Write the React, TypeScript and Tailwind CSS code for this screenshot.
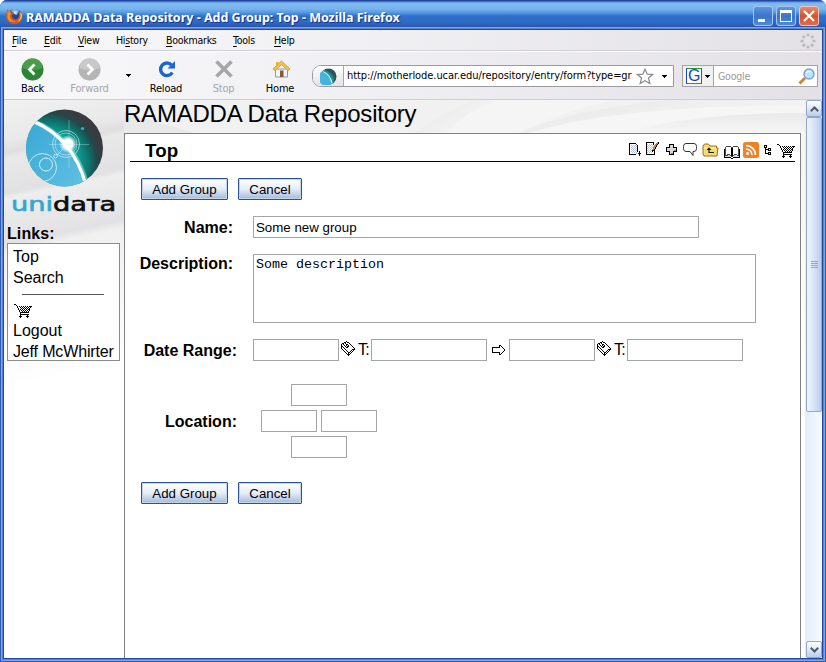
import React from "react";

const INK: Record<string, string> = {
  X: "#000000",
  d: "#4a4a4a",
  g: "#8a8a8a",
  l: "#d4d6dc",
  b: "#b9c3e0",
  w: "#ffffff",
  o: "#c98236",
};

function Pixels({ rows, className }: { rows: string[]; className?: string }) {
  const w = Math.max(...rows.map((r) => r.length));
  return (
    <svg
      width={w}
      height={rows.length}
      viewBox={`0 0 ${w} ${rows.length}`}
      shapeRendering="crispEdges"
      className={"shrink-0 " + (className ?? "")}
    >
      {rows.flatMap((row, y) =>
        row.split("").map((c, x) =>
          INK[c] ? <rect key={`${x}-${y}`} x={x} y={y} width="1" height="1" fill={INK[c]} /> : null
        )
      )}
    </svg>
  );
}

const CART = [
  "XX................",
  "..X...............",
  "...X.X.X.X.X.X.XXX",
  "...X..X.X.X.X.X.X.",
  "....X..X.X.X.X.X..",
  "....X.X.X.X.X.XX..",
  ".....X.X.X.X.X.X..",
  ".....X..X.X.X.X...",
  "......XXXXXXXXX...",
  "......X...........",
  "......XXXXXXXXX...",
  "......X......X....",
  ".....XXX....XXX...",
  "......X......X....",
];
const ARROW = [
  ".......XX....",
  ".......X.X...",
  "XXXXXXXX..X..",
  "X..........X.",
  "X...........X",
  "X...........X",
  "X..........X.",
  "XXXXXXXX..X..",
  ".......X.X...",
  ".......XX....",
];
const CALENDAR = [
  ".....X........",
  "...XX.XX......",
  ".XX.X...X.....",
  "X.X..XX..X....",
  "X..X.X.X..X...",
  "XX..X.XX...X..",
  "X.X..XX.....X.",
  "X..X.........X",
  ".X..X......XXX",
  "..X..X....X.X.",
  "...X..X..X.X..",
  "....X..XX.X...",
  ".....X.X.X....",
  "......XXX.....",
  ".......X......",
];
const ADD_DOC = [
  "XXXXXXX.....",
  "Xwwwwwwd....",
  "XwbwbwbwX...",
  "XwwbwbwbX...",
  "XwbwbwbwX...",
  "XwwbwbwbX...",
  "XwbwbwbwX...",
  "XwwbwbwbX...",
  "XwbwbwbwX.X.",
  "Xwwbwbwb..X.",
  "Xwwwwwwb.XXX",
  "XXXXXXX...X.",
  "..........X.",
];
const EDIT_DOC = [
  "XXXXXXXX...oX",
  "XwwwwwwX..ooX",
  "XbwbwbwX.ooX.",
  "XwbwbwbwooX..",
  "XbwbwbwbooX..",
  "XwbwbwbooX...",
  "XbwbwbwooX...",
  "XwbwbwooX....",
  "XbwbwbXXX....",
  "XwbwbwXwX....",
  "XbwbwbwwX....",
  "XwwwwwwwX....",
  "XXXXXXXXX....",
];
const PLUS = [
  "...XXXXX...",
  "...XlllX...",
  "...XlllX...",
  "XXXXlllXXXX",
  "XlllllllllX",
  "XlllllllllX",
  "XlllllllggX",
  "XXXXlllXXXX",
  "...XlllX...",
  "...XlggX...",
  "...XXXXX...",
];
const BOOK = [
  "..ddddd..ddddd..",
  ".dwwwwwddwwwwwd.",
  ".dwwwwwXXwwwwwd.",
  "XdwwwwwXXwwwwwdX",
  "XdwwwwwXXwwwwwdX",
  "XdwwwwwXXwwwwwdX",
  "XdwwwwwXXwwwwwdX",
  "XdwwwwwXXwwwwwdX",
  "XdwdddwXXwdddwdX",
  "XdddlldXXdllwddX",
  "XllllllddllllllX",
  "XXXXXXXwwXXXXXXX",
  ".......XX.......",
];
const TREE = [
  "XXX....",
  "X.X....",
  "XXX....",
  ".X..XXX",
  ".XXXX.X",
  ".X..XXX",
  ".X.....",
  ".X..XXX",
  ".XXXX.X",
  "....XXX",
];
const CARET = ["XXXXX", ".XXX.", "..X.."];

const MENU: [string, string, string, string][] = [
  ["", "F", "ile", "w-[32px]"],
  ["", "E", "dit", "w-[34px]"],
  ["", "V", "iew", "w-[38px]"],
  ["Hi", "s", "tory", "w-[50px]"],
  ["", "B", "ookmarks", "w-[67px]"],
  ["", "T", "ools", "w-[41px]"],
  ["", "H", "elp", "w-[40px]"],
];

function Firefox() {
  return (
    <svg width="17" height="17" viewBox="0 0 17 17" className="shrink-0">
      <circle cx="8.5" cy="8" r="7" fill="#24478f" />
      <path d="M5 2.500C7 .5 11 .5 13 3L11 7 8 6 6 4z" fill="#79b4e6" />
      <path d="M8 3l3 .5-1 3-2-1z" fill="#c4e2f7" />
      <path
        d="M1.500 1.500L3 3l2.500-.3L5.500 5l2.500.8-2 1.700c-.5 3 3 5 5.500 3.200C13.500 9 13.500 5.500 12.500 3.500l1.700 1.200.3-1.700C17 6 17 11.500 14 14c-4 3.500-10 2.500-12.500-1.500C-.5 9 .2 4.500 1.500 1.500z"
        fill="#d4571b"
      />
      <path d="M1.500 3.500l2-.2L5 5.500 3.800 8c0 3 2.700 5.500 6.200 5-3.500 2-7.500.5-8.500-3z" fill="#f0902e" />
      <path d="M14 4.500c1.500 4 0 7.500-3 9.500 4-.5 6-5.500 4.300-9z" fill="#fbd35c" />
    </svg>
  );
}

function ToolButton({ label, width, dim, children }: { label: string; width: string; dim?: boolean; children: React.ReactNode }) {
  return (
    <div className={"flex shrink-0 flex-col items-center pt-[5px] " + width}>
      <div className="flex h-[24px] items-center">{children}</div>
      <span className={"mt-[1px] text-[11px] leading-[14px] " + (dim ? "text-[#a7a6aa]" : "text-black")}>{label}</span>
    </div>
  );
}

function Globe() {
  return (
    <svg width="17" height="17" viewBox="0 0 17 17">
      <circle cx="8.500" cy="8.500" r="8" fill="#2a5560" />
      <path d="M5 2Q13 5 14.500 12L12 15Q12 7 3 2.500z" fill="#1d8f8d" />
      <path d="M2.500 3A8 8 0 1 0 12.500 15.300Q11 7 2.500 3z" fill="#45b3dc" />
      <path d="M3 3.500Q10 6 12 15" stroke="#c8eefa" strokeWidth="1.200" fill="none" />
    </svg>
  );
}

function Logo() {
  return (
    <svg width="80" height="80" viewBox="0 0 80 80" className="ml-[21px] mt-[9px] block">
      <defs>
        <radialGradient id="night" gradientUnits="userSpaceOnUse" cx="22" cy="54" r="62">
          <stop offset="0.500" stopColor="#0fa096" />
          <stop offset="0.680" stopColor="#0b746d" />
          <stop offset="0.800" stopColor="#23484a" />
          <stop offset="0.900" stopColor="#383c3e" />
        </radialGradient>
        <linearGradient id="day" x1="0" y1="0" x2="1" y2="1">
          <stop offset="0" stopColor="#36a7d4" />
          <stop offset="1" stopColor="#63c0e4" />
        </linearGradient>
        <radialGradient id="flare">
          <stop offset="0.500" stopColor="#fff" />
          <stop offset="1" stopColor="#fff" stopOpacity="0" />
        </radialGradient>
        <clipPath id="disc">
          <circle cx="39.500" cy="39" r="38.500" />
        </clipPath>
      </defs>
      <g clipPath="url(#disc)">
        <rect width="80" height="80" fill="url(#night)" />
        <path d="M0 8L10 13Q48 28 62 78V80H0z" fill="url(#day)" />
        <path d="M8 12Q49 29 62 76" stroke="#b8f0f0" strokeOpacity=".5" strokeWidth="5" fill="none" />
        <path d="M8 12Q48 29 61 76" stroke="#fff" strokeWidth="3" fill="none" />
        <circle cx="43" cy="35" r="9" fill="url(#flare)" />
        <circle cx="41" cy="35" r="13.500" stroke="#d7f3f6" strokeOpacity=".8" strokeWidth=".8" fill="none" />
        <circle cx="41" cy="35" r="11" stroke="#d7f3f6" strokeOpacity=".7" strokeWidth=".8" fill="none" />
        <path d="M44 11V59M24 35.500H64" stroke="#cfeef0" strokeOpacity=".5" strokeWidth=".7" />
        <circle cx="17.500" cy="58.500" r="14" stroke="#c5ebf6" strokeWidth="1" fill="none" />
        <circle cx="21" cy="55.500" r="6.500" stroke="#d5f1fa" strokeWidth="1" fill="none" />
        <circle cx="30.500" cy="47" r="1.800" stroke="#d5f1fa" strokeWidth=".8" fill="none" />
        <path d="M32 46L38 40" stroke="#c5ebf6" strokeWidth=".7" />
        <circle cx="57.500" cy="19.500" r="1.600" fill="#27b5dc" />
      </g>
    </svg>
  );
}

function Swooshes() {
  return (
    <svg width="681" height="33" viewBox="0 0 681 33" className="absolute left-0 top-0">
      <defs>
        <linearGradient id="sweep" x1="0" y1="0" x2="0" y2="1">
          <stop offset="0" stopColor="#e9e9ea" />
          <stop offset="1" stopColor="#f6f6f6" />
        </linearGradient>
        <linearGradient id="fold" x1="0" y1="0" x2="1" y2="0.600">
          <stop offset="0" stopColor="#e7e7e8" />
          <stop offset="1" stopColor="#f6f6f6" />
        </linearGradient>
      </defs>
      <rect width="681" height="33" fill="#f1f1f2" />
      <path d="M0 12L70 33H0z" fill="#e9e9ea" />
      <path d="M290 33Q320 12 350 0H376Q345 14 322 33z" fill="url(#fold)" />
      <path d="M322 33Q340 12 375 0H490Q440 10 395 33z" fill="#f5f5f5" />
      <path d="M395 33Q440 12 540 0H681V8Q500 8 440 33z" fill="url(#fold)" />
      <path d="M405 33Q500 4 681 6V13Q570 12 500 33z" fill="#f6f6f6" />
      <path d="M500 33Q570 13 681 13V33z" fill="url(#sweep)" />
    </svg>
  );
}

function Folder() {
  return (
    <svg width="17" height="14" viewBox="0 0 17 14">
      <path d="M1 3L2.500 1h4L8 3h6.500v2H16l-1 8H2L1 11z" fill="#f6da72" stroke="#9a7415" />
      <path d="M2 5h12" stroke="#fff5c0" />
      <path d="M7 9.500h5M7 10V5.500" stroke="#1d1d1d" strokeWidth="1.200" />
      <path d="M4.500 7L7 4.200L9.500 7z" fill="#1d1d1d" />
    </svg>
  );
}

function PushButton({ children, className }: { children: string; className: string }) {
  return (
    <button
      className={
        "h-[22px] shrink-0 rounded-[1px] border border-[#2c5391] bg-linear-to-b from-white via-[#e6edf6] to-[#a3b9dc] p-0 text-center text-[13.3px] leading-[21px] text-black shadow-[inset_0_0_0_1px_#c3d3ea] " +
        className
      }
    >
      {children}
    </button>
  );
}

function Buttons() {
  return (
    <div className="flex h-[22px] gap-[10px] pl-[16px]">
      <PushButton className="w-[87px]">Add Group</PushButton>
      <PushButton className="w-[64px]">Cancel</PushButton>
    </div>
  );
}

const BOX = "block h-[22px] shrink-0 rounded-none border border-[#a5a5a9] bg-white p-0 outline-none ";

function DateInput() {
  return (
    <>
      <input className={BOX + "w-[86px]"} />
      <Pixels rows={CALENDAR} className="ml-[2px] -mt-[4px]" />
      <span className="w-[16px] pl-[3px] text-[16px] tracking-[-0.7px]">T:</span>
      <input className={BOX + "w-[116px]"} />
    </>
  );
}

function CaptionButton({ red, children }: { red?: boolean; children: React.ReactNode }) {
  return (
    <div
      className={
        "flex h-[20px] w-[20px] items-center justify-center rounded-[3px] border " +
        (red
          ? "border-[#efc3b8] bg-linear-to-b from-[#e58b6c] via-[#d9512b] to-[#dd6b45]"
          : "border-[#a7c6ee] bg-linear-to-b from-[#5d97dd] via-[#3a75cb] to-[#4d8ad8]")
      }
    >
      {children}
    </div>
  );
}

function ScrollButton({ down }: { down?: boolean }) {
  return (
    <div className="flex h-[17px] w-[16px] shrink-0 items-center justify-center rounded-[2px] border border-[#92a9cb] bg-linear-to-b from-white via-[#dfe9f8] to-[#b9cdea]">
      <svg width="9" height="6" viewBox="0 0 9 6">
        <path d={down ? "M.8 .8L4.500 4.500L8.200 .8" : "M.8 5.200L4.500 1.500L8.200 5.200"} fill="none" stroke="#4d5a66" strokeWidth="2" />
      </svg>
    </div>
  );
}

export default function App() {
  return (
    <div className="flex h-[662px] w-[826px] flex-col overflow-hidden rounded-t-[7px] bg-[#2c57ad] font-['Liberation_Sans',Arial,sans-serif] text-black">
      <header className="flex h-[30px] shrink-0 items-center bg-[linear-gradient(#2446a0_0px,#2446a0_1px,#5b9be2_2px,#83bdf2_4px,#76b4ed_9px,#5394df_13px,#2e70c9_16px,#2c6bc4_22px,#2b55b4_27px,#2445a0_30px)] pl-[6px] pr-[7px] pt-[2px]">
        <Firefox />
        <h1 className="ml-[3px] mt-[3px] whitespace-nowrap font-['Noto_Sans',sans-serif] text-[12.5px] font-bold leading-[18px] text-white [text-shadow:1px_1px_#173582]">
          RAMADDA Data Repository - Add Group: Top - Mozilla Firefox
        </h1>
        <div className="ml-auto flex gap-[3px]">
          <CaptionButton>
            <i className="-ml-[4px] mt-[9px] h-[3px] w-[7px] bg-white" />
          </CaptionButton>
          <CaptionButton>
            <i className="h-[12px] w-[12px] border border-t-[3px] border-white" />
          </CaptionButton>
          <CaptionButton red>
            <svg width="12" height="12" viewBox="0 0 12 12">
              <path d="M1 1L11 11M11 1L1 11" stroke="#fff" strokeWidth="2.300" />
            </svg>
          </CaptionButton>
        </div>
      </header>

      <div className="flex min-h-0 flex-1 border-x-4 border-b-4 border-[#2f5db6] bg-[#7ba6e3]">
        <div className="flex min-w-0 flex-1 flex-col bg-white shadow-[0_0_0_1px_#24479f,0_0_0_2px_#5b86cf,0_0_0_3px_#7ba6dc]">
          <div className="flex h-[22px] shrink-0 items-center border-b border-white bg-[linear-gradient(90deg,#f8f7f9,#efeef1_50%,#e3e1e6)] pl-[8px] font-['DejaVu_Sans_Condensed','DejaVu_Sans',sans-serif] text-[10.5px] shadow-[inset_0_-1px_#cfccd2]">
            {MENU.map(([before, key, after, width]) => (
              <span key={key + after} className={"shrink-0 whitespace-nowrap tracking-[-0.25px] " + width}>
                {before}
                <u className="underline-offset-2">{key}</u>
                {after}
              </span>
            ))}
            <svg width="16" height="16" viewBox="0 0 16 16" className="ml-auto mr-[6px]">
              <g fill="#bbb9bd">
                <circle cx="8" cy="2" r="1.600" />
                <circle cx="12.200" cy="3.800" r="1.600" />
                <circle cx="14" cy="8" r="1.600" />
                <circle cx="12.200" cy="12.200" r="1.600" />
                <circle cx="8" cy="14" r="1.600" />
                <circle cx="3.800" cy="12.200" r="1.600" />
                <circle cx="2" cy="8" r="1.600" />
                <circle cx="3.800" cy="3.800" r="1.600" />
              </g>
            </svg>
          </div>

          <div className="flex h-[48px] shrink-0 border-b border-[#cfccd2] bg-[linear-gradient(90deg,#f8f7f9,#efeef1_50%,#e3e1e6)] font-['DejaVu_Sans_Condensed','DejaVu_Sans',sans-serif] tracking-[-0.2px]">
            <ToolButton label="Back" width="w-[57px]">
              <svg width="23" height="23" viewBox="0 0 23 23">
                <circle cx="11.500" cy="11.500" r="11" fill="#2e8435" />
                <path d="M1.500 10a10 10 0 0 1 20 0Q11 14 1.500 10z" fill="#5cab58" fillOpacity=".65" />
                <path d="M13.500 6.500L8.500 11.500L13.500 16.500" fill="none" stroke="#fff" strokeWidth="2.800" />
              </svg>
            </ToolButton>
            <ToolButton label="Forward" width="w-[57px]" dim>
              <svg width="23" height="23" viewBox="0 0 23 23">
                <circle cx="11.500" cy="11.500" r="11" fill="#b5b5b5" />
                <path d="M1.500 10a10 10 0 0 1 20 0Q11 14 1.500 10z" fill="#d0d0d0" fillOpacity=".7" />
                <path d="M9.500 6.500L14.500 11.500L9.500 16.500" fill="none" stroke="#fff" strokeWidth="2.800" />
              </svg>
            </ToolButton>
            <Pixels rows={CARET} className="ml-[8px] mr-[10px] mt-[22px]" />
            <ToolButton label="Reload" width="w-[50px]">
              <svg width="18" height="18" viewBox="0 0 18 18" className="ml-[2px]">
                <path d="M13.500 5A6.300 6.300 0 1 0 14.300 12.500" fill="none" stroke="#1965d8" strokeWidth="3.400" />
                <path d="M17 1V8.500H9.500z" fill="#1965d8" />
              </svg>
            </ToolButton>
            <ToolButton label="Stop" width="w-[65px]" dim>
              <svg width="18" height="18" viewBox="0 0 18 18">
                <path d="M1.500 1.500L16.500 16.500M16.500 1.500L1.500 16.500" stroke="#a6a6a8" strokeWidth="3.500" />
              </svg>
            </ToolButton>
            <ToolButton label="Home" width="w-[48px]">
              <svg width="19" height="18" viewBox="0 0 19 18" className="ml-[2px]">
                <path d="M3.500 9h12v8h-12z" fill="#f1f4fb" stroke="#7a9cd6" />
                <path d="M8 10.500h3.500V17H8z" fill="#93552a" />
                <path d="M9.500 1L18 9l-2 1.500-6.500-6L3 10.500 1 9z" fill="#f5c448" stroke="#dda128" />
                <path d="M4 2h2.500v3L4 7z" fill="#e7ae3c" />
              </svg>
            </ToolButton>

            <div className="ml-[8px] mt-[13px] flex h-[22px] w-[362px] shrink-0 items-center overflow-hidden rounded-l-[9px] border border-[#9c9aa0] bg-white">
              <div className="flex h-full w-[31px] shrink-0 items-center justify-center border-r border-[#aaa8ae] bg-linear-to-b from-white to-[#e4e3e8]">
                <Globe />
              </div>
              <span className="ml-[3px] w-[287px] shrink-0 whitespace-nowrap text-[11px] leading-[16px] tracking-[-0.07px]">
                http://motherlode.ucar.edu/repository/entry/form?type=gr
              </span>
              <svg width="18" height="17" viewBox="0 0 18 17" className="ml-[2px] shrink-0">
                <path
                  d="M9 1.200L11.200 6.200L16.600 6.600L12.500 10.100L13.800 15.500L9 12.700L4.200 15.500L5.500 10.100L1.400 6.600L6.800 6.200z"
                  fill="#fff"
                  stroke="#8e8e90"
                  strokeWidth="1.300"
                />
              </svg>
              <Pixels rows={CARET} className="ml-[8px]" />
            </div>

            <div className="ml-[8px] mt-[13px] flex h-[22px] w-[136px] shrink-0 items-center border border-[#a5a3a9] bg-white">
              <div className="flex h-full w-[31px] items-center border-r border-[#a5a3a9] bg-[#f1f0f3] pl-[3px]">
                <span className="flex h-[16px] w-[16px] items-center justify-center border border-b-[#1f9a36] border-l-[#1c49c2] border-r-[#d6231d] border-t-[#1f9a36] bg-white font-['Liberation_Sans'] text-[16px] leading-none text-[#1744b8]">
                  G
                </span>
                <Pixels rows={CARET} className="ml-[3px]" />
              </div>
              <span className="ml-[4px] text-[10.5px] leading-[16px] text-[#9b9b9b]">Google</span>
              <svg width="17" height="17" viewBox="0 0 17 17" className="ml-auto mr-[2px]">
                <path d="M1.500 15.500L7 10" stroke="#cf8430" strokeWidth="3" />
                <circle cx="11" cy="6" r="5" fill="#b9e5fb" stroke="#7da4cf" strokeWidth="1.500" />
                <path d="M8 5a3.500 3 0 0 1 5-1" stroke="#fff" fill="none" />
              </svg>
            </div>
          </div>

          <div className="flex min-h-0 flex-1">
            <div className="flex min-w-0 flex-1 bg-[linear-gradient(#e7e7e8_0px,#eaeaea_90px,#f6f6f6_190px,#fff_270px)]">
              <aside className="w-[120px] shrink-0 bg-[linear-gradient(168deg,#f1f1f2_0px,#e9e9ea_40px,#dfdfe1_52px,#e9e9ea_58px,#e1e1e3_92px,#eeeeef_97px,#e2e2e4_142px,#f0f0f1_150px,#fff_285px)]">
                <Logo />
                <div className="ml-[7px] mt-[3px] h-[26px] w-[90px] origin-left scale-x-[1.360] whitespace-nowrap font-['DejaVu_Sans'] text-[20px] leading-[25px] text-[#0c0c0c]">
                  <span className="text-[#2fa8d5] [-webkit-text-stroke:0.6px_#2fa8d5]">uni</span>
                  <span className="[-webkit-text-stroke:0.6px_#0c0c0c]">da</span>
                  <span className="text-[15px] [-webkit-text-stroke:0.6px_#0c0c0c]">T</span>
                  <span className="[-webkit-text-stroke:0.6px_#0c0c0c]">a</span>
                </div>
                <h2 className="ml-[3px] mt-[7px] text-[16px] font-bold leading-[18px] tracking-[0.1px]">Links:</h2>
                <nav className="ml-[3px] flex h-[118px] w-[113px] flex-col whitespace-nowrap border border-[#8c8c8c] bg-white pl-[5px] pt-[2px] text-[16px] leading-[21px]">
                  <a>Top</a>
                  <a>Search</a>
                  <div className="ml-[9px] mt-[6px] h-px w-[82px] shrink-0 bg-[#555]" />
                  <Pixels rows={CART} className="mb-[2px] ml-px mt-[9px]" />
                  <a>Logout</a>
                  <a className="tracking-[-0.15px]">Jeff McWhirter</a>
                </nav>
              </aside>

              <div className="flex w-[677px] shrink-0 flex-col">
                <div className="relative h-[33px] shrink-0">
                  <Swooshes />
                  <h1 className="relative whitespace-nowrap text-[24px] leading-[28px] tracking-[-0.22px]">RAMADDA Data Repository</h1>
                </div>
                <main className="flex flex-1 flex-col border border-b-0 border-[#808080] bg-white">
                  <div className="ml-[5px] flex h-[28px] w-[665px] shrink-0 border-b border-black">
                    <h2 className="ml-[15px] mt-[6px] text-[18.7px] font-bold leading-[22px] tracking-[0.1px]">Top</h2>
                    <div className="ml-auto flex">
                      <Pixels rows={ADD_DOC} className="mt-[9px]" />
                      <Pixels rows={EDIT_DOC} className="ml-[5px] mt-[8px]" />
                      <Pixels rows={PLUS} className="ml-[7px] mt-[10px]" />
                      <svg width="14" height="14" viewBox="0 0 14 14" className="ml-[6px] mt-[9px]">
                        <path d="M3 .5h8q2.500 0 2.500 3v2q0 3-2.500 3h-1v4l-3-4H3q-2.500 0-2.500-3v-2q0-3 2.500-3z" fill="#fff" stroke="#333" />
                      </svg>
                      <div className="ml-[5px] mt-[9px]">
                        <Folder />
                      </div>
                      <Pixels rows={BOOK} className="ml-[5px] mt-[12px]" />
                      <svg width="16" height="16" viewBox="0 0 16 16" className="ml-[3px] mt-[8px]">
                        <rect width="16" height="16" rx="2.500" fill="#ee8227" />
                        <circle cx="4.500" cy="11.500" r="1.500" fill="#fff" />
                        <path d="M3 7a6 6 0 0 1 6 6M3 3.500a9.500 9.500 0 0 1 9.500 9.500" stroke="#fff" strokeWidth="1.700" fill="none" />
                      </svg>
                      <Pixels rows={TREE} className="ml-[5px] mt-[11px]" />
                      <Pixels rows={CART} className="ml-[6px] mt-[10px]" />
                    </div>
                  </div>

                  <div className="mt-[16px]">
                    <Buttons />
                  </div>

                  <div className="mt-[16px] flex h-[22px]">
                    <label className="w-[108px] text-right text-[16px] font-bold leading-[23px]">Name:</label>
                    <input
                      defaultValue="Some new group"
                      className="ml-[20px] h-[22px] w-[446px] rounded-none border border-[#a5a5a9] bg-white px-[2px] text-[13.3px] outline-none"
                    />
                  </div>
                  <div className="mt-[16px] flex h-[69px]">
                    <label className="w-[108px] text-right text-[16px] font-bold leading-[19px]">Description:</label>
                    <textarea
                      defaultValue="Some description"
                      className="ml-[20px] h-[69px] w-[503px] resize-none rounded-none border border-[#a5a5a9] bg-white px-[2px] py-[2px] font-['Liberation_Mono',monospace] text-[13.35px] leading-[16px] outline-none"
                    />
                  </div>
                  <div className="mt-[16px] flex h-[22px] items-center">
                    <label className="w-[112px] pt-[2px] text-right text-[16px] font-bold leading-[22px]">Date Range:</label>
                    <div className="ml-[16px] flex items-center">
                      <DateInput />
                      <Pixels rows={ARROW} className="ml-[5px] mr-[4px]" />
                      <DateInput />
                    </div>
                  </div>
                  <div className="mt-[23px] flex h-[74px] items-center">
                    <label className="w-[112px] pt-[1px] text-right text-[16px] font-bold leading-[22px]">Location:</label>
                    <div className="ml-[24px] flex w-[116px] flex-col items-center gap-[4px]">
                      <input className={BOX + "w-[56px]"} />
                      <div className="flex gap-[4px]">
                        <input className={BOX + "w-[56px]"} />
                        <input className={BOX + "w-[56px]"} />
                      </div>
                      <input className={BOX + "w-[56px]"} />
                    </div>
                  </div>
                  <div className="mt-[24px]">
                    <Buttons />
                  </div>
                </main>
              </div>
              <div className="flex-1 bg-[linear-gradient(#f5f5f5_0px,#f7f7f7_100px,#fff_260px)]" />
            </div>

            <div className="flex w-[17px] shrink-0 flex-col bg-linear-to-r from-[#e2edfc] to-[#f7faff] pl-[1px]">
              <ScrollButton />
              <div className="flex h-[295px] w-[16px] shrink-0 flex-col items-center justify-center gap-[1px] rounded-[2px] border border-[#8fa8cb] bg-linear-to-r from-[#f0f6fe] via-[#d5e4f8] to-[#b9cde9]">
                <i className="h-px w-[7px] bg-[#8ea7cb]" />
                <i className="h-px w-[7px] bg-[#8ea7cb]" />
                <i className="h-px w-[7px] bg-[#8ea7cb]" />
                <i className="h-px w-[7px] bg-[#8ea7cb]" />
              </div>
              <div className="flex-1" />
              <ScrollButton down />
            </div>
          </div>
        </div>
      </div>
    </div>
  );
}
